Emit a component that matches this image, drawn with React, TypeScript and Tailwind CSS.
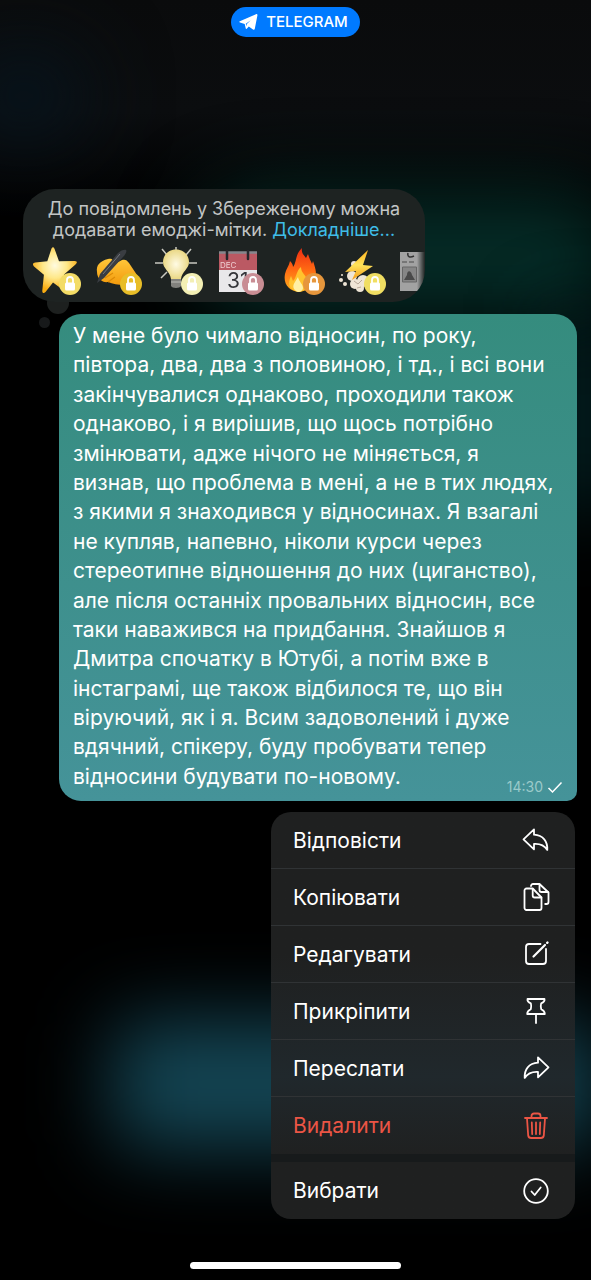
import type { ReactNode } from 'react'

const message = `У мене було чимало відносин, по року,
півтора, два, два з половиною, і тд., і всі вони
закінчувалися однаково, проходили також
однаково, і я вирішив, що щось потрібно
змінювати, адже нічого не міняється, я
визнав, що проблема в мені, а не в тих людях,
з якими я знаходився у відносинах. Я взагалі
не купляв, напевно, ніколи курси через
стереотипне відношення до них (циганство),
але після останніх провальних відносин, все
таки наважився на придбання. Знайшов я
Дмитра спочатку в Ютубі, а потім вже в
інстаграмі, ще також відбилося те, що він
віруючий, як і я. Всим задоволений і дуже
вдячний, спікеру, буду пробувати тепер`

const actions = [
  {
    label: 'Відповісти',
    icon: <path d="M12 3.3 1.5 13.3 12 23.3v-5.4c6-.4 10.2 1.2 13.3 6 .4-8.4-4-14.7-13.3-15.2Z" />,
  },
  {
    label: 'Копіювати',
    icon: (
      <>
        <path d="M4.5 5.5h6.200l8.800 9V25a2 2 0 0 1-2 2h-13a2 2 0 0 1-2-2V7.500a2 2 0 0 1 2-2Z" />
        <path d="M10.700 6v6.500a2 2 0 0 0 2 2h6.600" />
        <path d="M9 3a2 2 0 0 1 2-2h6.500l9 8.500V19a2 2 0 0 1-2 2h-1.300" />
        <path d="M17.500 1.500V7a2 2 0 0 0 2 2h6.500" />
      </>
    ),
  },
  {
    label: 'Редагувати',
    icon: (
      <>
        <path d="M18.500 4H7a3 3 0 0 0-3 3v14a3 3 0 0 0 3 3h14a3 3 0 0 0 3-3V9" />
        <path d="M11.500 16.500 23 5" strokeWidth="2.2" />
        <path d="m25.200 2.800.3-.3" strokeWidth="2.4" />
      </>
    ),
  },
  {
    label: 'Прикріпити',
    icon: (
      <>
        <path d="M5.500 2h17c.3 2.200-1.200 3.500-3.300 4.300-.6 1.900-.6 4 0 5.900 2 .9 3.600 2.400 3.600 4.800H5.200c0-2.400 1.600-3.900 3.600-4.800.6-1.900.6-4 0-5.900C6.700 5.500 5.200 4.200 5.500 2Z" />
        <path d="M14 17v9" />
      </>
    ),
  },
  {
    label: 'Переслати',
    icon: <path d="M16 3.3 26.5 13.3 16 23.3v-5.4c-6-.4-10.2 1.2-13.3 6-.4-8.4 4-14.7 13.3-15.2Z" />,
  },
  {
    label: 'Видалити',
    danger: true,
    icon: (
      <>
        <path d="M3 6h22" />
        <path d="M9.500 6V4A2.500 2.500 0 0 1 12 1.500h4A2.500 2.500 0 0 1 18.500 4v2" />
        <path d="m5 6.500 1.200 17A3 3 0 0 0 9.200 26h9.600a3 3 0 0 0 3-2.500L23 6.500" />
        <path d="M14 10.500V22M9.800 10.500l.4 11.500M18.200 10.500l-.4 11.500" />
      </>
    ),
  },
]

const tags = [
  {
    label: 'Зірка',
    badge: '#f3dc66',
    art: (
      <path d="M18.500 1.500c1-2 2.400-1.500 3 .3l4.500 12.400 15.800-.2c2.800.2 2.500 2 .7 3.500L31 27.500 34 42c.2 2.500-1.500 2.500-3.200 1.500L20 35.500 12.500 45c-1.800 1.800-3.400 1-3.200-1.500l1.600-15.800L1 19.500C-.8 17.500-.2 15.700 2.300 15.500l12-1.300Z" fill="url(#star)" />
    ),
  },
  {
    label: 'Рука, що пише',
    badge: '#e8bd28',
    art: (
      <>
        <path d="M3 25c-1-7 3-11 11-13 4-1 6 1 4 4l-3 4 13-7c3-1 5 0 7 3l8 12c3 4 1 8-4 9-8 2-18 1-25-2-5 1-11-3-11-10Z" fill="url(#hand)" />
        <path d="m9 27 7-5M11 31l8-5M14 35l7-5" stroke="#dd8a06" strokeWidth="1.2" />
        <path d="M3 36 6 27 24 6c3-3 7-4 8-3s0 4-3 7L10 31Z" fill="#3a3d42" />
        <path d="M9 27 26 7" stroke="#74787f" />
      </>
    ),
  },
  {
    label: 'Лампочка',
    badge: '#f3efb4',
    art: (
      <>
        <path d="M21 0v5M7 2l5 6M36 2l-5 6M0 16h8M34 16h8M6 31l6-6" stroke="#c8c8c0" strokeWidth="1.5" />
        <path d="M16 32h10v7c-1 2.500-9 2.500-10 0Z" fill="#82827e" />
        <path d="M16 35h10" stroke="#bcbcb6" />
        <path d="M21 2.500c7.500 0 13 5.500 13 12.500 0 7-7 9-8 17H16C15 24 8 22 8 15 8 8 13.500 2.500 21 2.500Z" fill="url(#bulb)" />
      </>
    ),
  },
  {
    label: 'Календар',
    badge: '#c98d94',
    art: (
      <>
        <path d="M3 6h38v39H3Z" fill="#e9e8ea" />
        <path d="M3 6h38v17H3Z" fill="#bb5963" />
        <path d="M3 5.500h38" stroke="#85868c" strokeWidth="2.5" />
        <path d="M11 4v8M32 4v8" stroke="#26272b" strokeWidth="2.5" strokeLinecap="round" />
        <text x="4" y="21" fontSize="8" fill="#efced1">DEC</text>
        <text x="11" y="41" fontSize="21" fill="#35363a">31</text>
      </>
    ),
  },
  {
    label: 'Вогонь',
    badge: '#e6963c',
    art: (
      <>
        <path d="M22 45C12 44 6 37 8 27c1-5 4-8 5-13 2 2 3 4 3 6 4-5 2-13 9-19-1 5 2 7 4 10l2-4c1 4 3 7 4 10l1-3c2 6 3 9 3 14 0 9-7 16-17 17Z" fill="url(#fire)" />
        <path d="M22 45c-10-2-12-8-8-16l2 5c4-4 3-10 8-14 0 6 5 8 7 14 1 6-3 10-9 11Z" fill="#ffc22e" />
        <path d="M21 45c-5-2-6-6-3-10l3-5c1 5 5 7 5 11 0 2-2 4-5 4Z" fill="#fff0a4" />
      </>
    ),
  },
  {
    label: 'Блискавка',
    badge: '#f0de62',
    art: (
      <>
        <g fill="#efe5d6">
          <circle cx="14" cy="29" r="5" />
          <circle cx="17" cy="37" r="5" />
          <circle cx="25" cy="34" r="6" />
          <circle cx="22" cy="41" r="4" />
          <circle cx="16" cy="17" r="3" />
          <circle cx="3" cy="33" r="2" />
          <circle cx="7" cy="37" r="2" />
          <circle cx="4" cy="28" r="1" />
        </g>
        <path d="m16 34 4 3 4-4m-5 8 4-1" stroke="#b8a898" />
        <path d="M30 3 7 25l11-1-4 9 21-14-10-1Z" fill="url(#bolt)" />
      </>
    ),
  },
  {
    label: 'Газета',
    art: (
      <>
        <path d="M1 5h40v39H1Z" fill="#a2a2a2" />
        <path d="M3 15h5M10 15h5" stroke="#4b4b4b" />
        <path d="M9 6c-1 4 2 5 6 3" stroke="#333" strokeWidth="1.5" />
        <path d="M3.500 20h14v15h-14Z" fill="#868686" stroke="#666" />
        <path d="m5 33 3-5c0-5 4-5 5 0l3 5Z" fill="#494949" />
      </>
    ),
  },
]

function MenuItem({ label, danger, children }: { label: string; danger?: boolean; children: ReactNode }) {
  return (
    <button
      type="button"
      role="menuitem"
      className={`flex h-[57px] w-full items-center justify-between pl-[22px] pr-[25px] text-left text-[21px] ${danger ? 'text-[#eb5545]' : 'text-white'}`}
    >
      {label}
      <svg width="28" height="28" viewBox="0 0 28 28" fill="none" stroke="currentColor" strokeWidth="1.8" strokeLinecap="round" strokeLinejoin="round">
        {children}
      </svg>
    </button>
  )
}

export default function App() {
  return (
    <main className="relative isolate flex min-h-screen flex-col overflow-hidden bg-black pb-[11px] pt-[7px] font-['Inter','Noto_Sans',sans-serif]">
      {/* blurred chat behind the menu */}
      <div className="absolute inset-0 -z-10">
        <div className="absolute inset-x-0 top-0 h-56 bg-linear-to-b from-[#0a0b0c] via-[#0b0d0f] to-transparent" />
        <div className="absolute -left-10 top-12 h-24 w-32 rounded-full bg-[#07141d] blur-2xl" />
        <div className="absolute -right-8 left-1/3 top-48 h-32 rounded-full bg-[#052c27] blur-2xl" />
        <div className="absolute -right-6 top-80 h-48 w-16 bg-[#04282a] blur-2xl" />
        <div className="absolute -right-2 left-28 top-[1020px] h-32 rounded-3xl bg-[#144655] blur-[40px]" />
      </div>

      <header className="flex justify-center">
        <a href="#telegram" className="flex h-[30px] items-center gap-2 rounded-full bg-[#007aff] pl-2 pr-3 text-[15px] font-medium text-white">
          <svg width="19" height="18" viewBox="0 0 19 18" fill="currentColor" aria-hidden="true">
            <path d="M.8 8.200 17 1.200c1-.4 1.600 0 1.400 1.200l-2.600 13.400c-.2 1-.9 1.300-1.800.7l-4.200-3-2.100 2.200c-.5.500-.9.300-1-.4L5.700 11 1 9.500C.2 9.200.1 8.600.8 8.200Zm6 2.500.5 2.600.5-2.300 4-3.800Z" />
          </svg>
          TELEGRAM
        </a>
      </header>

      <section className="relative ml-[23px] mr-auto mt-38 w-[402px] max-w-[calc(100%-46px)]">
        <div className="absolute -bottom-3 left-6 size-[22px] rounded-full bg-[#1d201f]" />
        <div className="absolute -bottom-[26px] left-4 size-[11px] rounded-full bg-[#17191a]" />
        <div className="relative h-[113px] overflow-hidden rounded-[32px] bg-[#1e2322] pt-[9px]">
          <p className="text-center text-[18px] leading-[21px] text-[#c2c5c5]">
            До повідомлень у Збереженому можна
            <br />
            додавати емоджі-мітки.{' '}
            <a href="#more" className="text-[#3fbde8]">Докладніше...</a>
          </p>
          <div className="mt-[7px] flex gap-[13px] overflow-hidden pl-[10px] mask-r-from-98%">
            {tags.map((tag) => (
              <button key={tag.label} type="button" aria-label={tag.label} className="shrink-0">
                <svg width="48" height="50" viewBox="0 0 48 50" fill="none">
                  {tag.art}
                  {tag.badge && (
                    <>
                      <circle cx="37" cy="37" r="11" fill={tag.badge} />
                      <rect x="32" y="35.5" width="10" height="8" rx="1.5" fill="#fff" />
                      <path d="M34 36v-3a3 3 0 0 1 6 0v3" stroke="#fff" strokeWidth="1.8" />
                    </>
                  )}
                </svg>
              </button>
            ))}
          </div>
        </div>
      </section>

      <article className="ml-[59px] mr-[14px] mt-3 rounded-[22px] rounded-br-[10px] bg-linear-to-b from-[#358c7e] to-[#459399] px-[14px] pb-1 pt-[7px] text-[21px] leading-[1.4] text-white">
        <p className="whitespace-pre-line">{message}</p>
        <div className="flex items-end justify-between gap-4">
          <p className="pb-1.5">відносини будувати по-новому.</p>
          <div className="flex items-center gap-1 text-[14px] leading-5 text-[#9bcaca]">
            <time>14:30</time>
            <svg width="16" height="16" viewBox="0 0 16 16" fill="none" stroke="#fff" strokeWidth="1.5">
              <path d="m1.500 9 4 4 9-9.500" />
            </svg>
          </div>
        </div>
      </article>

      <nav role="menu" className="ml-auto mr-4 mt-[11px] w-[304px] overflow-hidden rounded-[20px] bg-linear-to-b from-[#1f2020] from-35% via-[#20282c] via-65% to-[#1f2020] to-85%">
        <div className="divide-y divide-[#303335]">
          {actions.map((action) => (
            <MenuItem key={action.label} label={action.label} danger={action.danger}>
              {action.icon}
            </MenuItem>
          ))}
        </div>
        <div className="h-2 bg-[#171a1b]" />
        <MenuItem label="Вибрати">
          <circle cx="14" cy="14" r="11.8" />
          <path d="m9.500 14.500 3.200 3.500 6-7.500" />
        </MenuItem>
      </nav>

      <div className="mx-auto mt-auto h-[7px] w-[211px] rounded-full bg-white" />

      <svg width="0" height="0" className="absolute" aria-hidden="true">
        <defs>
          <radialGradient id="star" cx=".5" cy=".4" r=".55">
            <stop stopColor="#fffbe0" />
            <stop offset=".5" stopColor="#ffe889" />
            <stop offset="1" stopColor="#f9ac12" />
          </radialGradient>
          <linearGradient id="hand" x2="0" y2="1">
            <stop stopColor="#ffc73a" />
            <stop offset="1" stopColor="#f39a0c" />
          </linearGradient>
          <radialGradient id="bulb">
            <stop stopColor="#fffbe4" />
            <stop offset="1" stopColor="#ead886" />
          </radialGradient>
          <linearGradient id="fire" x2="0" y2="1">
            <stop stopColor="#ee2c12" />
            <stop offset=".5" stopColor="#ff6a13" />
            <stop offset="1" stopColor="#ffb21d" />
          </linearGradient>
          <linearGradient id="bolt" x2="0" y2="1">
            <stop stopColor="#ffb31f" />
            <stop offset=".5" stopColor="#ffe35a" />
            <stop offset="1" stopColor="#f59a17" />
          </linearGradient>
        </defs>
      </svg>
    </main>
  )
}
